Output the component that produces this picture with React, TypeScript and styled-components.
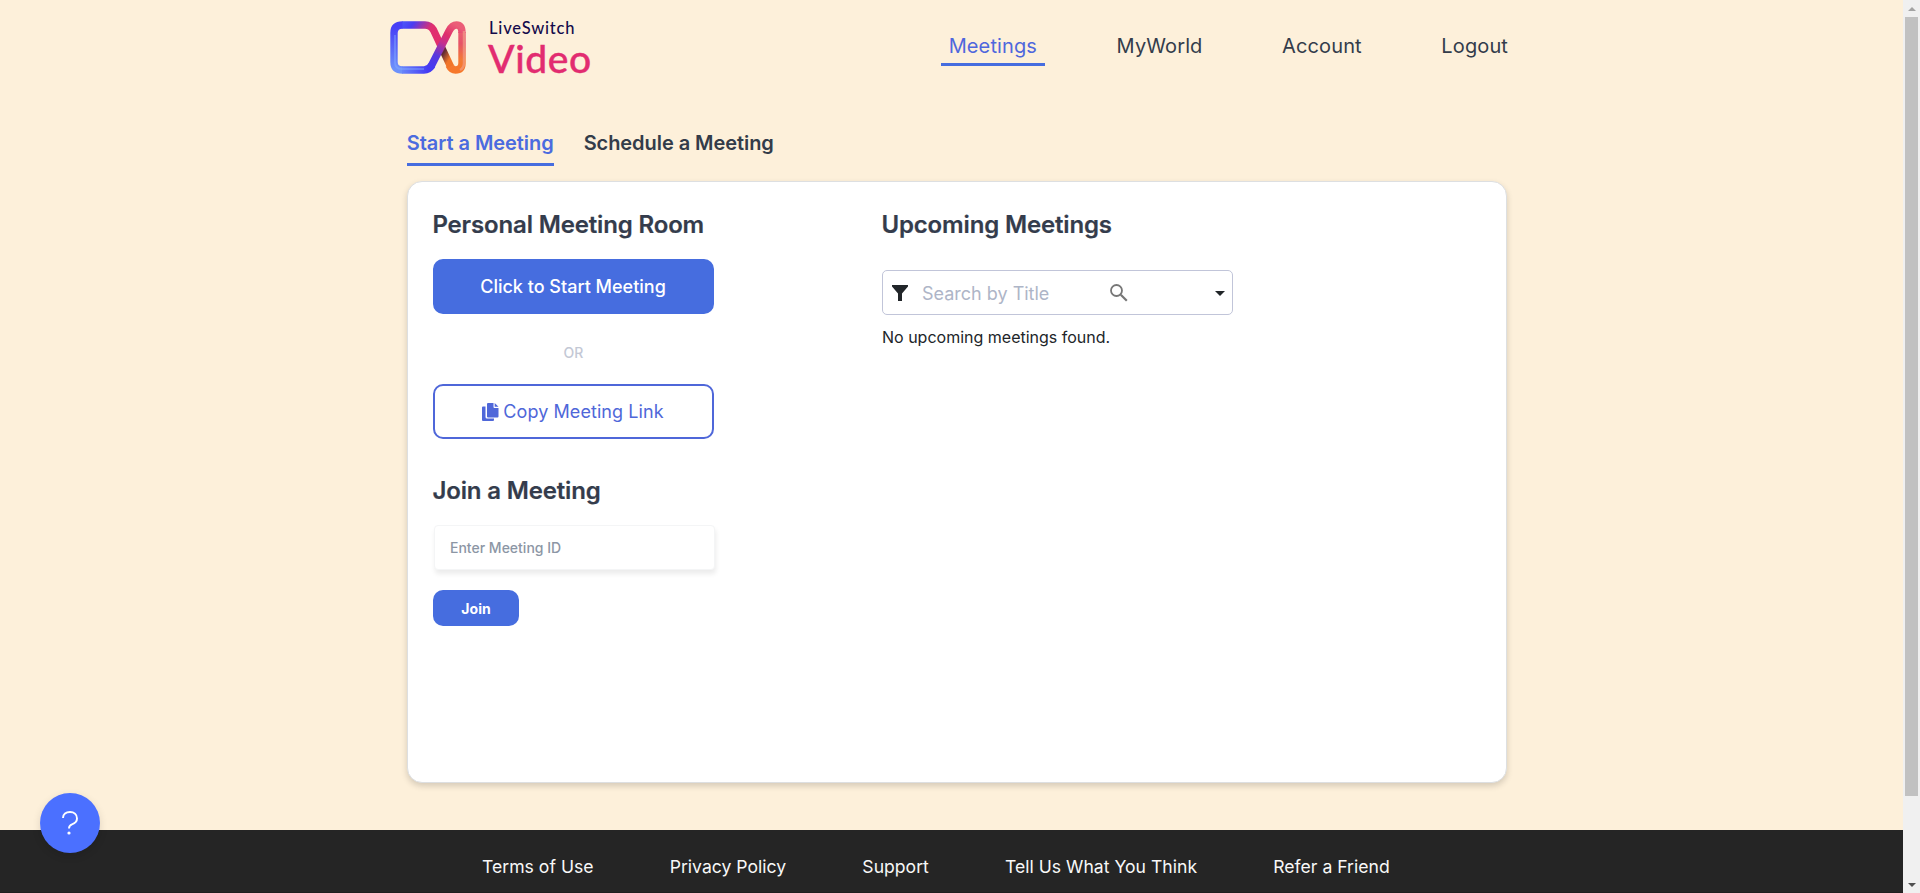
import React from "react";
import styled, { createGlobalStyle } from "styled-components";

const Global = createGlobalStyle`
  *, *::before, *::after { box-sizing: border-box; }
  body { margin: 0; overflow: hidden; background: #fdf0da; font-family: Inter, "Liberation Sans", sans-serif; color: #212529; }
  a { color: inherit; text-decoration: none; }
  button, input { font-family: inherit; }
`;

const Viewport = styled.div`
  display: flex;
  height: 893px;
  overflow: hidden;
`;
const Page = styled.div`
  flex: 1;
  display: flex;
  flex-direction: column;
`;
const Header = styled.header`
  display: flex;
  justify-content: space-between;
  align-items: flex-start;
  height: 123px;
  padding: 17px 387px 0 390px;
`;
const Brand = styled.a`
  display: flex;
  gap: 22px;
  svg { display: block; margin-top: 4px; }
`;
const BrandText = styled.div`
  display: flex;
  flex-direction: column;
  font-family: Lato, sans-serif;
`;
const BrandName = styled.span`
  margin-left: 1px;
  font-size: 16.5px;
  line-height: 23px;
  font-weight: 500;
  letter-spacing: 0.82px;
  color: #140a4b;
`;
const BrandProduct = styled.span`
  font-size: 39px;
  line-height: 37px;
  font-weight: 500;
  letter-spacing: 0.6px;
  color: #e22c70;
  -webkit-text-stroke: 0.4px #e22c70;
`;
const Nav = styled.nav`
  display: flex;
  gap: 63.6px;
  margin-top: 12px;
`;
const NavLink = styled.a<{ $active?: boolean }>`
  padding: 0 8px;
  font-size: 20px;
  line-height: 34px;
  letter-spacing: 0.12px;
  color: ${(p) => (p.$active ? "#4f67dd" : "#333c4b")};
  border-bottom: 3px solid ${(p) => (p.$active ? "#466ddf" : "transparent")};
`;
const Tabs = styled.div`
  display: flex;
  gap: 30px;
  margin-left: 406.8px;
`;
const Tab = styled.a<{ $active?: boolean }>`
  font-size: 20px;
  font-weight: 600;
  line-height: 40px;
  letter-spacing: -0.06px;
  color: ${(p) => (p.$active ? "#4b6bdf" : "#333c49")};
  border-bottom: 3px solid ${(p) => (p.$active ? "#466ddf" : "transparent")};
`;
const Card = styled.main`
  display: flex;
  width: 1100px;
  height: 602px;
  margin: 15px 0 47px 407px;
  padding: 28px 25px;
  background: #fff;
  border: 1px solid #dddfe1;
  border-radius: 15px;
  box-shadow: 0 3px 6px rgba(0, 0, 0, 0.16);
`;
const Column = styled.section<{ $width: number }>`
  display: flex;
  flex-direction: column;
  align-items: flex-start;
  width: ${(p) => p.$width}px;
`;
const Heading = styled.h2`
  margin: 0 0 0 -0.6px;
  font-size: 24px;
  font-weight: 600;
  line-height: 30px;
  letter-spacing: -0.15px;
  color: #343c4c;
  -webkit-text-stroke: 0.2px #343c4c;
`;
const WideButton = styled.button<{ $outline?: boolean }>`
  display: flex;
  align-items: center;
  justify-content: center;
  gap: 4px;
  width: 281px;
  height: 55px;
  padding: 0 1px 0 0;
  border: 2px solid ${(p) => (p.$outline ? "#4f67d9" : "#466ddf")};
  border-radius: 10px;
  background: ${(p) => (p.$outline ? "#fff" : "#466ddf")};
  color: ${(p) => (p.$outline ? "#4f67d9" : "#fff")};
  font-size: 18px;
  font-weight: ${(p) => (p.$outline ? 400 : 500)};
  letter-spacing: ${(p) => (p.$outline ? "0.08px" : "0")};
`;
const StartButton = styled(WideButton)`
  margin-top: 19px;
`;
const Divider = styled.div`
  display: flex;
  align-items: center;
  justify-content: center;
  width: 281px;
  height: 70px;
  padding-top: 8px;
  font-size: 14px;
  line-height: 20px;
  font-weight: 500;
  color: #c3c8d5;
`;
const JoinHeading = styled(Heading)`
  margin-top: 37px;
`;
const MeetingIdInput = styled.input`
  width: 281px;
  height: 45px;
  margin: 19px 0 20px 1px;
  padding: 0 15px;
  border: 1px solid #f4f5f6;
  border-radius: 4px;
  box-shadow: 1px 4px 5px rgba(0, 0, 0, 0.08);
  font-size: 14px;
  font-weight: 500;
  background: #fff;
  &::placeholder { color: #8c96a5; opacity: 1; }
`;
const JoinButton = styled.button`
  width: 86px;
  height: 36px;
  padding: 1px 0 0;
  border: 0;
  border-radius: 10px;
  background: #466ddf;
  color: #fff;
  font-size: 14px;
  font-weight: 700;
`;
const SearchBox = styled.div`
  display: flex;
  align-items: center;
  width: 351px;
  height: 45px;
  margin-top: 30px;
  padding: 0 7px 0 9px;
  border: 1px solid #c1c5d9;
  border-radius: 5px;
`;
const SearchInput = styled.input`
  width: 188px;
  margin: 1px 0 0 14px;
  padding: 0;
  border: 0;
  background: transparent;
  font-size: 18px;
  &::placeholder { color: #aeb5c7; opacity: 1; }
`;
const CaretSlot = styled.span`
  display: flex;
  margin: 2px 0 0 auto;
`;
const Empty = styled.p`
  margin: 10px 0 0;
  font-size: 16px;
  line-height: 24px;
`;
const Footer = styled.footer`
  display: flex;
  gap: 76.1px;
  height: 63px;
  padding: 24px 0 0 482px;
  background: #252525;
  border-bottom: 1px solid #1e1e1e;
  color: #f8f8f8;
  font-size: 17.6px;
  line-height: 25px;
  letter-spacing: 0.01px;
`;
const HelpButton = styled.button`
  position: fixed;
  left: 40px;
  top: 793px;
  width: 60px;
  height: 60px;
  display: flex;
  align-items: center;
  justify-content: center;
  padding: 0;
  border: 0;
  border-radius: 50%;
  background: #4b70ff;
  box-shadow: 0 3px 8px rgba(0, 0, 0, 0.12);
`;
const ScrollTrack = styled.div`
  display: flex;
  flex-direction: column;
  align-items: center;
  justify-content: space-between;
  width: 17px;
  background: #f0f0f0;
`;
const ScrollArrow = styled.span`
  display: flex;
  align-items: center;
  justify-content: center;
  width: 17px;
  height: 17px;
`;
const ScrollThumb = styled.span`
  width: 13px;
  height: 779px;
  margin-bottom: auto;
  background: #c1c1c1;
`;

const LogoMark = () => (
  <svg width="76" height="54" viewBox="0 0 76 54" fill="none" strokeLinejoin="round">
    <defs>
      <linearGradient id="top" gradientUnits="userSpaceOnUse" x1="4" y1="6" x2="64" y2="44">
        <stop offset="0" stopColor="#4d62fb" />
        <stop offset="0.2" stopColor="#4a3df2" />
        <stop offset="0.44" stopColor="#df2f70" />
        <stop offset="0.64" stopColor="#e22e6c" />
        <stop offset="0.73" stopColor="#c92f60" />
        <stop offset="0.78" stopColor="#5a2a35" />
        <stop offset="0.9" stopColor="#f17528" />
      </linearGradient>
      <linearGradient id="side" gradientUnits="userSpaceOnUse" x1="0" y1="6" x2="0" y2="48">
        <stop offset="0" stopColor="#4840f6" />
        <stop offset="1" stopColor="#6d91fb" />
      </linearGradient>
      <linearGradient id="bottom" gradientUnits="userSpaceOnUse" x1="8" y1="0" x2="38" y2="0">
        <stop offset="0" stopColor="#6d91fb" />
        <stop offset="1" stopColor="#453bf4" />
      </linearGradient>
      <linearGradient id="cross" gradientUnits="userSpaceOnUse" x1="38" y1="48" x2="66" y2="4">
        <stop offset="0" stopColor="#453bf4" />
        <stop offset="0.3" stopColor="#5739df" />
        <stop offset="0.58" stopColor="#c62f8c" />
        <stop offset="0.75" stopColor="#df2f6b" />
        <stop offset="1" stopColor="#eb5d77" />
      </linearGradient>
      <linearGradient id="right" gradientUnits="userSpaceOnUse" x1="0" y1="4" x2="0" y2="50">
        <stop offset="0" stopColor="#ed6479" />
        <stop offset="0.4" stopColor="#e65368" />
        <stop offset="0.75" stopColor="#f37935" />
        <stop offset="1" stopColor="#f6782a" />
      </linearGradient>
    </defs>
    <g strokeWidth="7.4">
      <path d="M72 11V42Q72 49 65.500 49Q61.500 49 59 44" stroke="url(#right)" />
      <path d="M12 4H35Q40.500 4 43.500 9L60.500 45.500" stroke="url(#top)" />
      <path d="M12.500 4Q4 4 4 12V41Q4 49 12.500 49" stroke="url(#side)" />
      <path d="M12 49H34Q39 49 42 44" stroke="url(#bottom)" />
      <path d="M40.500 46.500L59 10Q62 4 66.500 4Q72 4 72 12" stroke="url(#cross)" />
    </g>
    <path d="M74 10V42Q74 47 70 49" stroke="#f3a08c" strokeOpacity="0.65" strokeWidth="2.500" />
    <path d="M5 14V41Q5 48 12 48H34" stroke="#8ab1ff" strokeOpacity="0.4" strokeWidth="2" />
  </svg>
);

const CopyIcon = () => (
  <svg width="17" height="18" viewBox="0 0 17 18" fill="currentColor">
    <path d="M0 4.500Q0 3.500 1 3.500H3.500V14Q3.500 15.500 5 15.500H12V17Q12 18 11 18H1Q0 18 0 17Z" />
    <path d="M5 1Q5 0 6 0H11.500V4Q11.500 5 12.500 5H16.500V13.500Q16.500 14.500 15.500 14.500H6Q5 14.500 5 13.500Z" />
    <path d="M12.700 0L16.500 3.800H12.700Z" />
  </svg>
);

export default function App() {
  return (
    <>
      <Global />
      <Viewport>
        <Page>
          <Header>
            <Brand href="#">
              <LogoMark />
              <BrandText>
                <BrandName>LiveSwitch</BrandName>
                <BrandProduct>Video</BrandProduct>
              </BrandText>
            </Brand>
            <Nav>
              <NavLink href="#" $active>Meetings</NavLink>
              <NavLink href="#">MyWorld</NavLink>
              <NavLink href="#">Account</NavLink>
              <NavLink href="#">Logout</NavLink>
            </Nav>
          </Header>
          <Tabs>
            <Tab href="#" $active>Start a Meeting</Tab>
            <Tab href="#">Schedule a Meeting</Tab>
          </Tabs>
          <Card>
            <Column $width={449}>
              <Heading>Personal Meeting Room</Heading>
              <StartButton>Click to Start Meeting</StartButton>
              <Divider>OR</Divider>
              <WideButton $outline>
                <CopyIcon />
                Copy Meeting Link
              </WideButton>
              <JoinHeading>Join a Meeting</JoinHeading>
              <MeetingIdInput placeholder="Enter Meeting ID" />
              <JoinButton>Join</JoinButton>
            </Column>
            <Column $width={599}>
              <Heading>Upcoming Meetings</Heading>
              <SearchBox>
                <svg width="16" height="16" viewBox="0 0 16 16" fill="#212529">
                  <path d="M0 0H16V1.500L10 8.500V16H6V8.500L0 1.500Z" />
                </svg>
                <SearchInput placeholder="Search by Title" />
                <svg width="18" height="18" viewBox="0 0 18 18" fill="none" stroke="#777">
                  <circle cx="6.500" cy="6.500" r="5.500" strokeWidth="1.800" />
                  <path d="M10.800 10.800L16.800 16.800" strokeWidth="2.200" />
                </svg>
                <CaretSlot>
                  <svg width="10" height="5" viewBox="0 0 10 5" fill="#212529">
                    <path d="M0 0H10L5 5Z" />
                  </svg>
                </CaretSlot>
              </SearchBox>
              <Empty>No upcoming meetings found.</Empty>
            </Column>
          </Card>
          <Footer>
            <a href="#">Terms of Use</a>
            <a href="#">Privacy Policy</a>
            <a href="#">Support</a>
            <a href="#">Tell Us What You Think</a>
            <a href="#">Refer a Friend</a>
          </Footer>
        </Page>
        <ScrollTrack>
          <ScrollArrow>
            <svg width="8" height="4" viewBox="0 0 8 4" fill="#a3a3a3"><path d="M4 0L8 4H0Z" /></svg>
          </ScrollArrow>
          <ScrollThumb />
          <ScrollArrow>
            <svg width="8" height="4" viewBox="0 0 8 4" fill="#505050"><path d="M4 4L8 0H0Z" /></svg>
          </ScrollArrow>
        </ScrollTrack>
      </Viewport>
      <HelpButton aria-label="Help">
        <svg width="16" height="24" viewBox="0 0 16 24" fill="none" stroke="#fff" strokeWidth="1.900">
          <path d="M1 7C1 3 4 1 8 1C12 1 15 3.500 15 7.500C15 11 12.500 12.500 10 13.300C8 14 7 15 7 17.500" />
          <circle cx="7" cy="22" r="1.600" fill="#fff" stroke="none" />
        </svg>
      </HelpButton>
    </>
  );
}
